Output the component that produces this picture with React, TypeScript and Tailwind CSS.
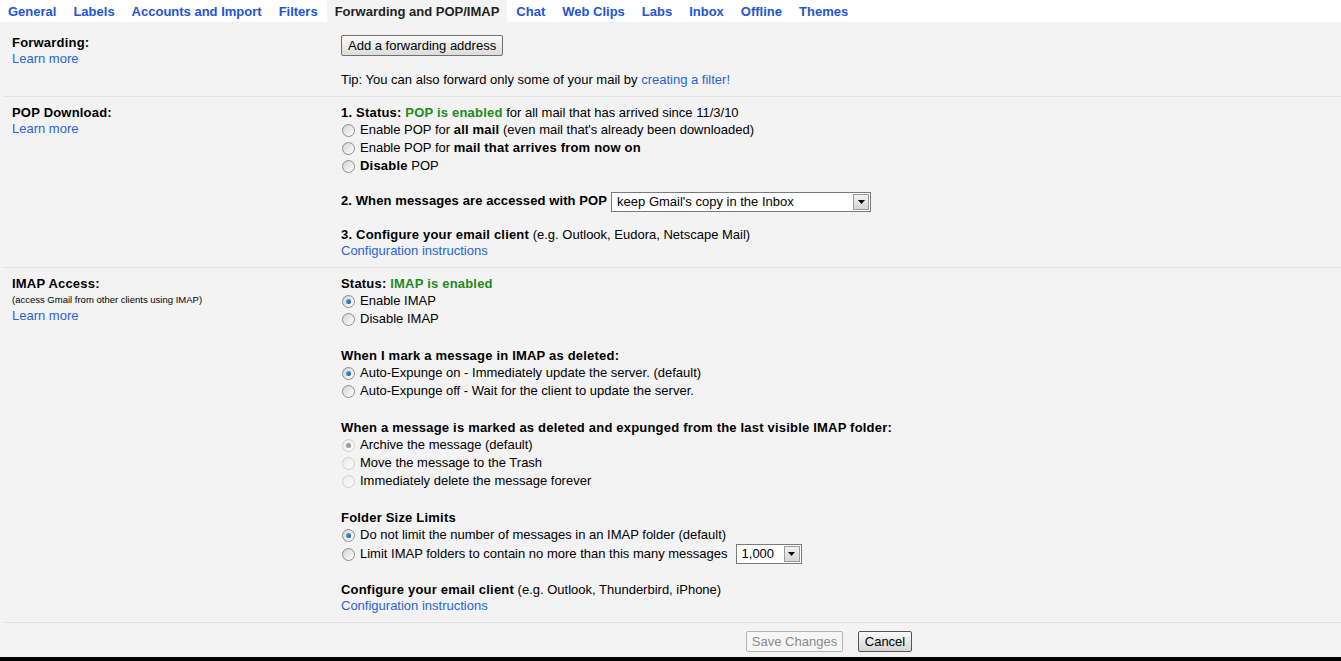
import React from 'react';

const tabs = [
  'General',
  'Labels',
  'Accounts and Import',
  'Filters',
  'Forwarding and POP/IMAP',
  'Chat',
  'Web Clips',
  'Labs',
  'Inbox',
  'Offline',
  'Themes',
];

const Radio = ({ checked = false, faded = false }: { checked?: boolean; faded?: boolean }) => (
  <span
    className={`relative inline-block w-[13px] h-[13px] rounded-full border shrink-0 mr-[5px] ${
      faded
        ? 'border-[#cfcfcf] bg-gradient-to-br from-[#ececec] to-[#fbfbfb]'
        : 'border-[#8c8c8c] bg-gradient-to-br from-[#d4d4d4] to-[#ffffff]'
    }`}
  >
    {checked && (
      <span
        className={`absolute left-[3px] top-[3px] w-[5px] h-[5px] rounded-full ${
          faded ? 'bg-[#9a9a9a]' : 'bg-gradient-to-br from-[#5fb0ea] to-[#0b4f8f]'
        }`}
      />
    )}
  </span>
);

const Option = ({ checked, faded, children }: { checked?: boolean; faded?: boolean; children: React.ReactNode }) => (
  <div className="flex items-center h-[18px] pl-px">
    <Radio checked={checked} faded={faded} />
    <span>{children}</span>
  </div>
);

// bold text in the reference renders a touch wider than Liberation Sans bold
const B = ({ children, className = '' }: { children: React.ReactNode; className?: string }) => (
  <span className={`font-bold tracking-[0.2px] ${className}`}>{children}</span>
);

const Select = ({ value, width }: { value: string; width: string }) => (
  <div className={`flex items-stretch h-[20px] bg-white border border-[#7a7a7a] ${width}`}>
    <span className="flex-1 pl-[5px] leading-[18px] text-black">{value}</span>
    <span className="w-[16px] m-px flex items-center justify-center bg-gradient-to-b from-[#f2f2f2] to-[#d6d6d6] border border-[#9a9a9a]">
      <svg width="7" height="4" viewBox="0 0 7 4">
        <path d="M0 0h7L3.5 4z" fill="#000" />
      </svg>
    </span>
  </div>
);

const Link = ({ children }: { children: React.ReactNode }) => (
  <span className="text-[#2a62d9] cursor-pointer">{children}</span>
);

export default function App() {
  return (
    <div
      className="h-[661px] bg-black flex flex-col text-[13px] text-black"
      style={{ fontFamily: '"Liberation Sans", Arial, sans-serif' }}
    >
      <div className="bg-[#f3f3f3]">
        {/* tabs */}
        <div className="flex gap-px h-[22px] bg-white">
          {tabs.map((t) => (
            <div
              key={t}
              className={`px-2 pt-px flex items-center font-bold ${
                t === 'Forwarding and POP/IMAP' ? 'bg-[#f3f3f3] text-[#222]' : 'text-[#2255d6] cursor-pointer'
              }`}
            >
              {t}
            </div>
          ))}
        </div>

        {/* Forwarding */}
        <div className="flex ml-1 pl-2 pt-[12px] pb-[7px]">
          <div className="w-[329px] shrink-0 leading-[16px]">
            <div className="pt-px"><B>Forwarding:</B></div>
            <Link>Learn more</Link>
          </div>
          <div className="pt-px">
            <button className="h-[21px] px-[6px] border border-[#707070] rounded-[2px] bg-gradient-to-b from-[#fafafa] to-[#dcdcdc] leading-[18px]">
              Add a forwarding address
            </button>
            <div className="mt-[15px] leading-[18px]">
              Tip: You can also forward only some of your mail by <Link>creating a filter!</Link>
            </div>
          </div>
        </div>

        {/* POP */}
        <div className="flex ml-1 pl-2 pt-[8px] pb-[8px] border-t border-[#e2e2e2]">
          <div className="w-[329px] shrink-0 leading-[16px]">
            <div><B>POP Download:</B></div>
            <Link>Learn more</Link>
          </div>
          <div>
            <div className="leading-[16px]">
              <B>1. Status: </B>
              <B className="text-[#1e8a1e]">POP is enabled</B> for all mail that has arrived since 11/3/10
            </div>
            <Option>
              Enable POP for <B>all mail</B> (even mail that's already been downloaded)
            </Option>
            <Option>
              Enable POP for <B>mail that arrives from now on</B>
            </Option>
            <Option>
              <B>Disable</B> POP
            </Option>
            <div className="flex items-center mt-[17px] h-[20px]">
              <span className="font-bold tracking-[0.1px] mr-[4px] -mt-[3px]">2. When messages are accessed with POP</span>
              <Select value="keep Gmail's copy in the Inbox" width="w-[260px]" />
            </div>
            <div className="mt-[15px] leading-[16px]">
              <B>3. Configure your email client</B> (e.g. Outlook, Eudora, Netscape Mail)
            </div>
            <div className="leading-[16px]">
              <Link>Configuration instructions</Link>
            </div>
          </div>
        </div>

        {/* IMAP */}
        <div className="flex ml-1 pl-2 pt-[8px] pb-[8px] border-t border-[#e2e2e2]">
          <div className="w-[329px] shrink-0 leading-[16px]">
            <div><B>IMAP Access:</B></div>
            <div className="text-[9.5px]">(access Gmail from other clients using IMAP)</div>
            <Link>Learn more</Link>
          </div>
          <div>
            <div className="leading-[16px]">
              <B>Status: </B>
              <B className="text-[#1e8a1e]">IMAP is enabled</B>
            </div>
            <Option checked>Enable IMAP</Option>
            <Option>Disable IMAP</Option>

            <div className="mt-[20px] leading-[16px]">
              <B>When I mark a message in IMAP as deleted:</B>
            </div>
            <Option checked>Auto-Expunge on - Immediately update the server. (default)</Option>
            <Option>Auto-Expunge off - Wait for the client to update the server.</Option>

            <div className="mt-[20px] leading-[16px]">
              <B>When a message is marked as deleted and expunged from the last visible IMAP folder:</B>
            </div>
            <Option checked faded>Archive the message (default)</Option>
            <Option faded>Move the message to the Trash</Option>
            <Option faded>Immediately delete the message forever</Option>

            <div className="mt-[20px] leading-[16px]">
              <B>Folder Size Limits</B>
            </div>
            <Option checked>Do not limit the number of messages in an IMAP folder (default)</Option>
            <div className="flex items-center h-[20px] pl-px">
              <Radio />
              <span className="mr-[8px]">Limit IMAP folders to contain no more than this many messages</span>
              <Select value="1,000" width="w-[66px]" />
            </div>

            <div className="mt-[18px] leading-[16px]">
              <B>Configure your email client</B> (e.g. Outlook, Thunderbird, iPhone)
            </div>
            <div className="leading-[16px]">
              <Link>Configuration instructions</Link>
            </div>
          </div>
        </div>

        {/* footer buttons */}
        <div className="flex gap-[15px] ml-1 pl-[742px] pt-[8px] pb-[5px] border-t border-[#e2e2e2]">
          <button className="h-[21px] w-[97px] border border-[#b5b5b5] rounded-[2px] bg-[#f6f6f6] text-[#8a8a8a] leading-[18px]">
            Save Changes
          </button>
          <button className="h-[21px] w-[54px] border border-[#555] rounded-[2px] bg-gradient-to-b from-[#fafafa] to-[#d4d4d4] leading-[18px]">
            Cancel
          </button>
        </div>
      </div>
    </div>
  );
}
